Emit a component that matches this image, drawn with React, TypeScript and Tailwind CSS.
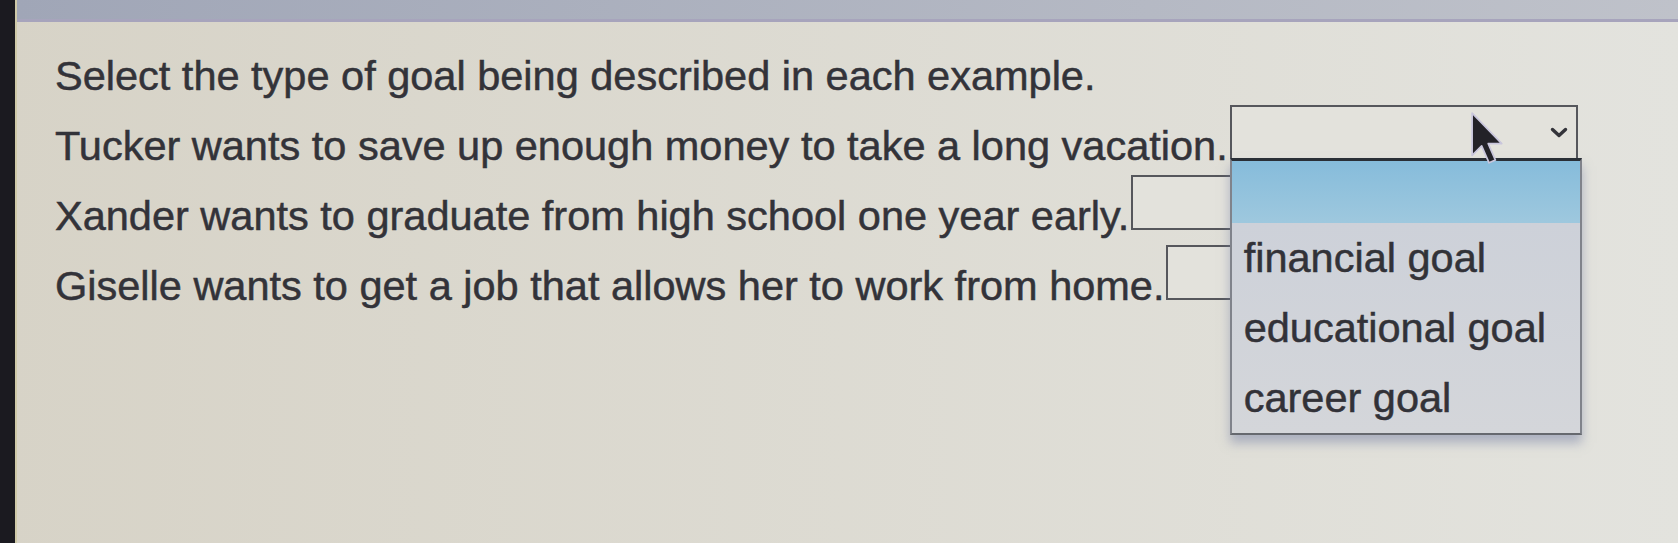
const rows = [
  { text: "Tucker wants to save up enough money to take a long vacation.", open: true },
  { text: "Xander wants to graduate from high school one year early.", open: false },
  { text: "Giselle wants to get a job that allows her to work from home.", open: false },
];

const options = ["financial goal", "educational goal", "career goal"];

function Chevron() {
  return (
    <svg width="18" height="11" viewBox="0 0 18 11" className="absolute right-[8px] top-[20px]">
      <polyline points="2.5,2.5 9,8.5 15.5,2.5" fill="none" stroke="#34343a" strokeWidth="3.4" strokeLinecap="round" strokeLinejoin="round" />
    </svg>
  );
}

function Cursor() {
  return (
    <svg width="36" height="55" viewBox="0 0 17 26" className="absolute left-[238px] top-[4px] z-20">
      <path d="M1 1 L1 21 L5.5 16.5 L9 24.5 L12 23.2 L8.6 15.4 L15 15.4 Z" fill="#232228" stroke="#c9c6dc" strokeWidth="0.8" strokeLinejoin="round" />
    </svg>
  );
}

function Dropdown() {
  return (
    <div className="absolute -left-[2px] top-full z-10 w-[352px] border-t-[3px] border-x-2 border-b-2 border-t-[#2a2f36] border-x-[#80838b] border-b-[#66696f] shadow-[0_8px_10px_rgba(120,130,165,0.5)]">
      <div className="h-[62px] bg-linear-to-b from-[#86bcdb] to-[#9ec8de]" />
      <div className="bg-linear-to-b from-[#cdd1d9] to-[#d4d6da]">
        {options.map((o) => (
          <div key={o} className="h-[70px] pl-[12px] leading-[70px] text-[#323238]">
            {o}
          </div>
        ))}
      </div>
    </div>
  );
}

export default function App() {
  return (
    <div
      className="flex h-[543px] w-[1678px] overflow-hidden bg-linear-to-r from-[#d7d3c7] to-[#e3e3de] text-[41.5px] text-[#333339] [-webkit-text-stroke:0.5px_#333339]"
      style={{ fontFamily: '"Liberation Sans", Arial, sans-serif' }}
    >
      <div className="w-[15px] shrink-0 bg-[#1b1a20]" />
      <div className="w-[2px] shrink-0 bg-[#cfc9a8]" />
      <div className="flex flex-1 flex-col">
        <div className="h-[19px] bg-linear-to-r from-[#a0a6b7] to-[#bfc2ca]" />
        <div className="h-[3px] bg-[#a7a4bc]" />
        <div className="pl-[38px] pt-[19px]">
          <div className="h-[70px] whitespace-nowrap leading-[70px]">
            Select the type of goal being described in each example.
          </div>
          {rows.map((r) => (
            <div key={r.text} className="h-[70px] whitespace-nowrap leading-[70px]">
              {r.text}
              <span className="relative ml-[2px] -mt-[6px] inline-block h-[55px] w-[348px] align-baseline border-2 border-[#56575c] bg-[#e3e2dc]">
                {r.open && (
                  <>
                    <Chevron />
                    <Cursor />
                    <Dropdown />
                  </>
                )}
              </span>
            </div>
          ))}
        </div>
      </div>
    </div>
  );
}
